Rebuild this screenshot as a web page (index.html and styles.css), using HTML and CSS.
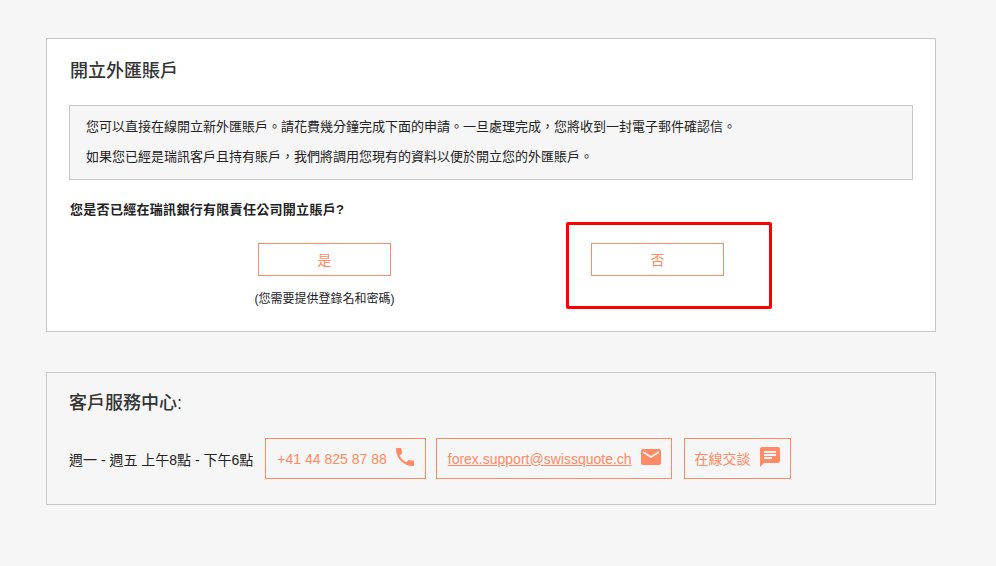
FILE: index.html
```html
<!DOCTYPE html>
<html lang="zh-TW">
<head>
  <meta charset="UTF-8">
  <meta name="viewport" content="width=device-width, initial-scale=1.0">
  <title>開立外匯賬戶</title>
  <link rel="stylesheet" href="styles.css">
</head>
<body>
  <div class="page">
    <section class="card open-account">
      <h2>開立外匯賬戶</h2>
      <div class="notice">
        <p>您可以直接在線開立新外匯賬戶。請花費幾分鐘完成下面的申請。一旦處理完成，您將收到一封電子郵件確認信。</p>
        <p>如果您已經是瑞訊客戶且持有賬戶，我們將調用您現有的資料以便於開立您的外匯賬戶。</p>
      </div>
      <h3>您是否已經在瑞訊銀行有限責任公司開立賬戶?</h3>
      <div class="choices">
        <div class="choice">
          <a class="choice-btn" href="#">是</a>
          <span class="hint">(您需要提供登錄名和密碼)</span>
        </div>
        <div class="choice">
          <a class="choice-btn" href="#">否</a>
        </div>
      </div>
      <div class="highlight"></div>
    </section>

    <section class="card support">
      <h2>客戶服務中心:</h2>
      <div class="contact-row">
        <span class="hours">週一 - 週五 上午8點 - 下午6點</span>
        <a class="contact" href="#">
          <span>+41 44 825 87 88</span>
          <svg width="24" height="24" viewBox="0 0 24 24"><path d="M6.6 10.8c1.4 2.8 3.8 5.1 6.6 6.6l2.2-2.2c.3-.3.7-.4 1-.2 1.1.4 2.3.6 3.6.6.6 0 1 .4 1 1V20c0 .6-.4 1-1 1C10.600 21 3 13.400 3 4c0-.6.4-1 1-1h3.500c.6 0 1 .4 1 1 0 1.300.2 2.500.6 3.600.1.300 0 .7-.2 1l-2.300 2.200z"/></svg>
        </a>
        <a class="contact email" href="#">
          <span class="mail">forex.support@swissquote.ch</span>
          <svg width="24" height="24" viewBox="0 0 24 24"><path d="M20 4H4c-1.100 0-2 .9-2 2v12c0 1.100.9 2 2 2h16c1.100 0 2-.9 2-2V6c0-1.100-.9-2-2-2zm0 4l-8 5-8-5V6l8 5 8-5v2z"/></svg>
        </a>
        <a class="contact chat" href="#">
          <span>在線交談</span>
          <svg width="24" height="24" viewBox="0 0 24 24"><path d="M20 2H4c-1.100 0-2 .9-2 2v18l4-4h14c1.100 0 2-.9 2-2V4c0-1.100-.9-2-2-2zM6 9h12v2H6V9zm8 5H6v-2h8v2zm4-6H6V6h12v2z"/></svg>
        </a>
      </div>
    </section>
  </div>
</body>
</html>
```

FILE: styles.css
```css
body {
  margin: 0;
  background: #f6f6f6;
  color: #222;
  font-family: "Liberation Sans", "Noto Sans CJK TC", sans-serif;
  font-size: 13px;
}
.page {
  width: 890px;
  margin-left: 46px;
  padding-top: 38px;
}
.card {
  position: relative;
  box-sizing: border-box;
  border: 1px solid #c8c8c8;
}
h2 {
  margin: 0;
  font-size: 18px;
  line-height: 24px;
  font-weight: 500;
  color: #333;
}
.open-account {
  height: 294px;
  background: #fff;
  padding: 20px 22px 0 22px;
}
.open-account h2 {
  margin-left: 1px;
}
.notice {
  box-sizing: border-box;
  height: 75px;
  margin-top: 22px;
  padding: 11px 16px 0;
  background: #f6f6f6;
  border: 1px solid #c8c8c8;
}
.notice p {
  margin: 0 0 11px;
  line-height: 19px;
}
h3 {
  margin: 20px 0 0 1px;
  font-size: 13px;
  line-height: 19px;
  font-weight: 700;
  letter-spacing: .3px;
  color: #222;
}
.choices {
  display: flex;
  margin-top: 24px;
}
.choice {
  width: 333px;
  display: flex;
  flex-direction: column;
  align-items: center;
}
.choice:first-child {
  margin-left: 89px;
}
.choice-btn {
  box-sizing: border-box;
  width: 133px;
  height: 33px;
  line-height: 32px;
  text-align: center;
  border: 1px solid #ff8a65;
  color: #ff8a65;
  font-size: 14px;
  text-decoration: none;
  background: #fff;
}
.hint {
  margin-top: 14px;
  line-height: 19px;
  font-size: 12px;
}
.highlight {
  position: absolute;
  left: 519px;
  top: 183px;
  width: 206px;
  height: 87px;
  box-sizing: border-box;
  border: 3px solid #f00;
  border-radius: 2px;
}
.support {
  height: 133px;
  margin-top: 40px;
  padding: 18px 22px 0;
}
.contact-row {
  display: flex;
  align-items: center;
  margin-top: 23px;
}
.hours {
  font-size: 14px;
  margin-right: 12px;
}
.contact {
  box-sizing: border-box;
  height: 41px;
  display: flex;
  align-items: center;
  gap: 6px;
  padding: 0 8px 0 11px;
  margin-right: 10px;
  border: 1px solid #ff8a65;
  color: #ff8a65;
  font-size: 14px;
  text-decoration: none;
}
.contact.email {
  gap: 7px;
}
.contact.chat {
  gap: 7px;
  padding-left: 10px;
  margin-left: 2px;
}
.contact.chat span {
  margin-bottom: 2px;
}
.contact svg {
  fill: #ff8a65;
  flex: none;
  margin-bottom: 3px;
}
.mail {
  text-decoration: underline;
}
```
